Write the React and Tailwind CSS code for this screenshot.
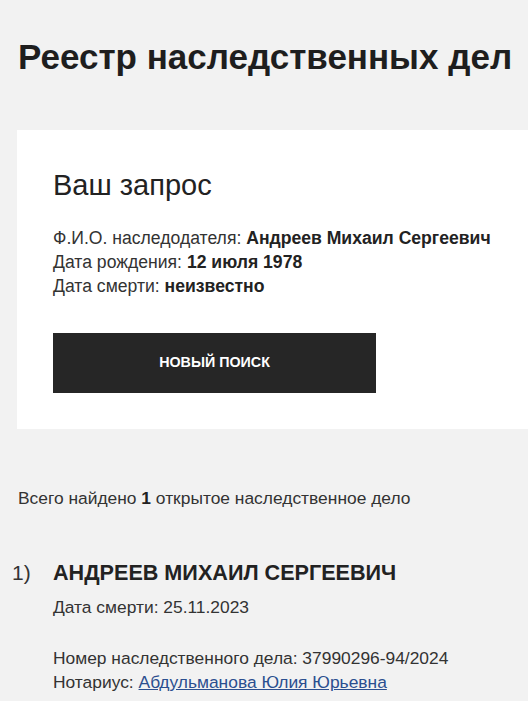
export default function App() {
  return (
    <div className="min-h-screen bg-[#f2f2f2] text-[#222] overflow-hidden" style={{ fontFamily: '"Liberation Sans", Arial, sans-serif' }}>
      <h1 className="pl-[18px] pt-[35px] text-[35px] leading-[44px] font-bold text-[#1e1e1e]">Реестр наследственных дел</h1>

      <div className="ml-[17px] mt-[51px] bg-white pl-9 pt-[38px] pb-[36px]">
        <h2 className="text-[29px] leading-[34px] text-[#222]">Ваш запрос</h2>
        <div className="mt-[24px] text-[17.6px] leading-[24px] text-[#333]">
          <p>Ф.И.О. наследодателя: <b className="text-[#222]">Андреев Михаил Сергеевич</b></p>
          <p>Дата рождения: <b className="text-[#222]">12 июля 1978</b></p>
          <p>Дата смерти: <b className="text-[#222]">неизвестно</b></p>
        </div>
        <button className="mt-[35px] w-[323px] h-[60px] bg-[#262626] text-white text-[14.3px] font-bold uppercase">
          Новый поиск
        </button>
      </div>

      <p className="pl-[18px] mt-[58px] text-[17.4px] leading-[22px] text-[#333]">
        Всего найдено <b className="text-[#222]">1</b> открытое наследственное дело
      </p>

      <div className="mt-[50px] flex">
        <span className="w-[53px] pl-[12px] text-[21px] leading-[28px] text-[#333]">1)</span>
        <div>
          <h3 className="text-[21.6px] leading-[28px] font-bold uppercase text-[#222]">Андреев Михаил Сергеевич</h3>
          <p className="mt-[8px] text-[17.4px] leading-[24px] text-[#333]">Дата смерти: 25.11.2023</p>
          <p className="mt-[27px] text-[17.4px] leading-[24px] text-[#333]">Номер наследственного дела: 37990296-94/2024</p>
          <p className="text-[17.4px] leading-[24px] text-[#333]">
            Нотариус: <a href="#" className="text-[#2b4f8f] underline">Абдульманова Юлия Юрьевна</a>
          </p>
        </div>
      </div>
    </div>
  );
}
